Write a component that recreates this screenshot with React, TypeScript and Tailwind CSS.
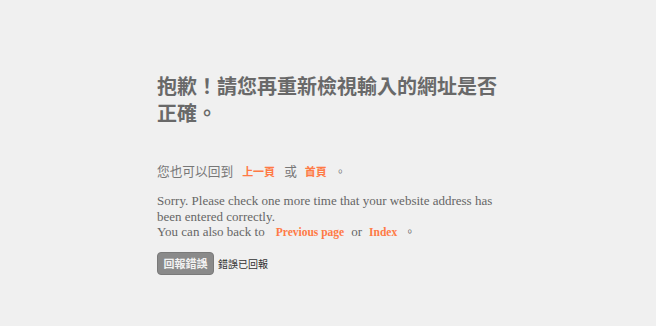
import React from 'react';

const cjk = '"Noto Sans CJK TC", "Noto Sans", sans-serif';

export default function App() {
  return (
    <div className="min-h-[326px] w-full bg-[#f0f0f0]">
      <div className="mx-auto w-[344px] pt-[72px] pl-[1px]">
        <h1
          className="text-[20px] font-bold leading-[27px] text-[#696969]"
          style={{ fontFamily: cjk }}
        >
          抱歉！請您再重新檢視輸入的網址是否正確。
        </h1>

        <p
          className="mt-[35px] flex items-center text-[12.7px] leading-[20px] text-[#777777]"
          style={{ fontFamily: cjk }}
        >
          <span>您也可以回到</span>
          <a className="ml-[9px] mr-[9px] text-[11px] font-bold text-[#ff7a45]">上一頁</a>
          <span>或</span>
          <a className="ml-[8px] mr-[8px] text-[11px] font-bold text-[#ff7a45]">首頁</a>
          <span className="text-[11px]">。</span>
        </p>

        <div
          className="mt-[12px] text-[13px] leading-[16px] text-[#666666]"
          style={{ fontFamily: '"Liberation Serif", serif' }}
        >
          <p>Sorry. Please check one more time that your website address has been entered correctly.</p>
          <p className="-mt-[2px] flex h-[16px] items-baseline">
            <span>You can also back to</span>
            <a className="ml-[11px] mr-[7px] text-[11.5px] font-bold text-[#ff7a45]">Previous page</a>
            <span>or</span>
            <a className="ml-[7px] mr-[7px] text-[11.5px] font-bold text-[#ff7a45]">Index</a>
            <span className="text-[11px]" style={{ fontFamily: cjk }}>。</span>
          </p>
        </div>

        <div className="mt-[13px] flex items-center" style={{ fontFamily: cjk }}>
          <button className="h-[23px] w-[57px] rounded-[4px] border border-[#7a7a7a] bg-[#8a8a8a] text-[11px] font-bold text-[#f2f2f2]">
            回報錯誤
          </button>
          <span className="ml-[4px] text-[10px] text-[#333333]">錯誤已回報</span>
        </div>
      </div>
    </div>
  );
}
